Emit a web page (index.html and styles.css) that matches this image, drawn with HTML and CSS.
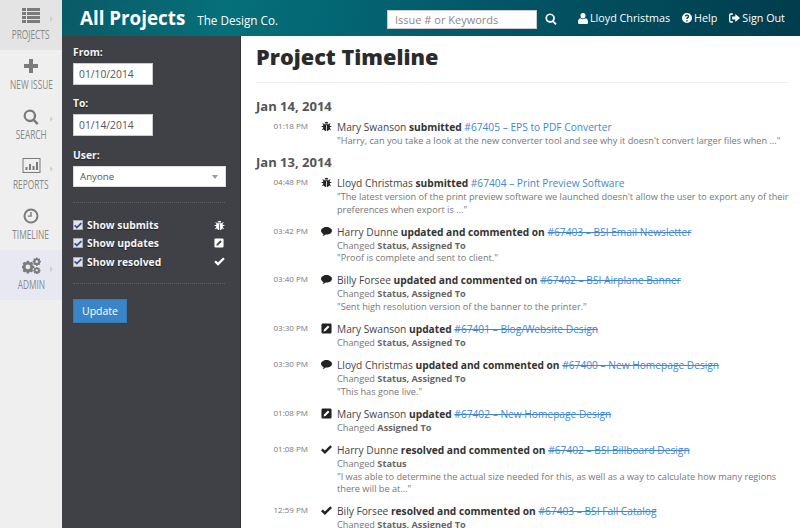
FILE: index.html
```html
<!DOCTYPE html>
<html lang="en">
<head>
<meta charset="utf-8">
<title>Project Timeline</title>
<link rel="stylesheet" href="styles.css">
</head>
<body>
<svg class="sprite" aria-hidden="true">
  <symbol id="i-bug" viewBox="0 0 14 14"><path d="M4.600 3.200a2.400 2.400 0 0 1 4.800 0zM3.600 4h6.800l.9-1.600 1 .6-1.100 1.900v1.600h2v1.200h-2V9l1.400 2.200-1 .7-1-1.500C10 11.700 8.500 12.700 7.500 12.800V5.500h-1v7.300C5.500 12.700 4 11.700 3.400 10.400l-1 1.500-1-.7L2.800 9V7.700h-2V6.500h2V4.900L1.700 3l1-.6z"/></symbol>
  <symbol id="i-comment" viewBox="0 0 14 12"><path d="M7 .2c3.800 0 7 2.200 7 4.900s-3.200 4.800-7 4.800H6c-1 .9-2.400 1.700-4 1.900.7-.7 1.200-1.600 1.300-2.500C1.300 8.300 0 6.800 0 5.100 0 2.400 3.200.2 7 .2z"/></symbol>
  <symbol id="i-edit" viewBox="0 0 12 12"><path fill-rule="evenodd" d="M2 .5h8A1.500 1.500 0 0 1 11.500 2v8a1.500 1.500 0 0 1-1.500 1.500H2A1.500 1.500 0 0 1 .5 10V2A1.500 1.500 0 0 1 2 .5zM7.600 2.800 3.300 7.100 2.800 9.200l2.100-.5 4.300-4.300z"/></symbol>
  <symbol id="i-check" viewBox="0 0 14 12"><path d="M5 11.800 0 6.800l2.200-2.200L5 7.400 11.800.6 14 2.800z"/></symbol>
  <symbol id="i-search" viewBox="0 0 16 16"><path fill-rule="evenodd" d="M6.800.5a6.300 6.300 0 0 1 5.100 10l3.700 3.700-1.700 1.700-3.700-3.700A6.300 6.300 0 1 1 6.800.5zm0 2.300a4 4 0 1 0 0 8 4 4 0 0 0 0-8z"/></symbol>
  <symbol id="i-list" viewBox="0 0 18 15"><path d="M0 0h4v3H0zM5 0h13v3H5zM0 4h4v3H0zM5 4h13v3H5zM0 8h4v3H0zM5 8h13v3H5zM0 12h4v3H0zM5 12h13v3H5z"/></symbol>
  <symbol id="i-plus" viewBox="0 0 14 14"><path d="M5 0h4v5h5v4H9v5H5V9H0V5h5z"/></symbol>
  <symbol id="i-chart" viewBox="0 0 18 15"><path fill-rule="evenodd" d="M0 0h18v15H0zm1 1v13h16V1zM3 9h2v3H3zM6.500 6h2v6h-2zM10 8h2v4h-2zM13.500 4h2v8h-2z"/></symbol>
  <symbol id="i-clock" viewBox="0 0 16 16"><path fill-rule="evenodd" d="M8 .5a7.500 7.500 0 1 1 0 15 7.500 7.500 0 0 1 0-15zm0 2a5.500 5.500 0 1 0 0 11 5.500 5.500 0 0 0 0-11zM7.300 4h1.400v4.800H4.800V7.400h2.500z"/></symbol>
  <symbol id="i-cogs" viewBox="0 0 20 17"><path fill-rule="evenodd" d="M5 3.500h2.400l.3 1.400 1.200.5 1.200-.8 1.700 1.700-.8 1.200.5 1.200 1.400.3v2.400l-1.400.3-.5 1.200.8 1.200-1.700 1.700-1.200-.8-1.200.5-.3 1.400H5l-.3-1.400-1.200-.5-1.200.8L.6 14.100l.8-1.200-.5-1.200-.9-.3V9l.9-.3.5-1.200-.8-1.200 1.700-1.700 1.200.8 1.200-.5zm1.200 4a2.500 2.500 0 1 0 0 5 2.500 2.500 0 0 0 0-5z"/><path fill-rule="evenodd" d="M14.800 0h1.500l.2 1 .8.300.9-.5 1 1-.5.900.3.800 1 .2V5.200l-1 .2-.3.800.5.900-1 1-.9-.5-.8.300-.2 1h-1.500l-.2-1-.8-.3-.9.5-1-1 .5-.9-.3-.8-1-.2V3.700l1-.2.3-.8-.5-.9 1-1 .9.500.8-.3zm.8 3a1.400 1.400 0 1 0 0 2.900 1.400 1.400 0 0 0 0-2.900z"/><path fill-rule="evenodd" d="M15 10h1.300l.2.800.7.300.7-.4.900.9-.4.700.3.700.8.200v1.300l-.8.200-.3.700.4.700-.9.900-.7-.4-.7.300-.2.800H15l-.2-.8-.7-.3-.7.4-.9-.9.4-.7-.3-.7-.8-.2v-1.300l.8-.2.3-.7-.4-.7.9-.9.700.4.700-.3zm.650 2.400a1.200 1.200 0 1 0 0 2.400 1.200 1.200 0 0 0 0-2.400z"/></symbol>
  <symbol id="i-user" viewBox="0 0 12 13"><path d="M6 0a3 3 0 0 1 3 3.200C9 5 7.700 6.500 6 6.500S3 5 3 3.200A3 3 0 0 1 6 0zM3.300 6.300C4 7 5 7.500 6 7.500s2-.5 2.700-1.200C10.600 6.500 12 8 12 10.500V12a1 1 0 0 1-1 1H1a1 1 0 0 1-1-1v-1.500C0 8 1.400 6.500 3.300 6.300z"/></symbol>
  <symbol id="i-help" viewBox="0 0 12 12"><path fill-rule="evenodd" d="M6 0a6 6 0 1 1 0 12A6 6 0 0 1 6 0zM5 8.600v1.700h1.900V8.600zM6 1.800c-1.500 0-2.500.8-2.700 2.100l1.600.3c.1-.6.500-.9 1-.9s.9.300.9.800c0 .4-.2.600-.7 1-.7.500-1.100 1-1.100 1.900v.2h1.800v-.1c0-.5.200-.7.700-1.100.7-.5 1.100-1 1.100-1.900 0-1.300-1-2.300-2.600-2.300z"/></symbol>
  <symbol id="i-signout" viewBox="0 0 14 12"><path d="M5 0v1.800H2.500c-.4 0-.7.300-.7.700v7c0 .4.300.7.700.7H5V12H2.500A2.500 2.500 0 0 1 0 9.500v-7A2.500 2.500 0 0 1 2.500 0zM8 1l6 5-6 5V8H4V4h4z"/></symbol>
</svg>

<div class="app">
  <nav class="rail">
    <a class="rail-item is-current"><svg class="rail-icon ic-list"><use href="#i-list"/></svg><span class="rail-label">PROJECTS</span><i class="rail-caret"></i></a>
    <a class="rail-item"><svg class="rail-icon ic-plus"><use href="#i-plus"/></svg><span class="rail-label">NEW ISSUE</span></a>
    <a class="rail-item"><svg class="rail-icon ic-search"><use href="#i-search"/></svg><span class="rail-label">SEARCH</span><i class="rail-caret"></i></a>
    <a class="rail-item"><svg class="rail-icon ic-chart"><use href="#i-chart"/></svg><span class="rail-label">REPORTS</span><i class="rail-caret"></i></a>
    <a class="rail-item"><svg class="rail-icon ic-clock"><use href="#i-clock"/></svg><span class="rail-label">TIMELINE</span></a>
    <a class="rail-item is-active"><svg class="rail-icon ic-cogs"><use href="#i-cogs"/></svg><span class="rail-label">ADMIN</span><i class="rail-caret"></i></a>
  </nav>

  <div class="shell">
    <header class="topbar">
      <div class="brand"><strong class="brand-title">All Projects</strong><span class="brand-sub">The Design Co.</span></div>
      <div class="search"><input class="search-input" type="text" placeholder="Issue # or Keywords"><svg class="search-icon"><use href="#i-search"/></svg></div>
      <div class="userlinks">
        <a class="ulink"><svg class="ul-icon ul-user"><use href="#i-user"/></svg>Lloyd Christmas</a>
        <a class="ulink"><svg class="ul-icon ul-help"><use href="#i-help"/></svg>Help</a>
        <a class="ulink"><svg class="ul-icon ul-out"><use href="#i-signout"/></svg>Sign Out</a>
      </div>
    </header>

    <div class="body">
      <aside class="filters">
        <label class="f-label">From:</label>
        <input class="f-date" type="text" value="01/10/2014">
        <label class="f-label f-to">To:</label>
        <input class="f-date" type="text" value="01/14/2014">
        <label class="f-label f-user">User:</label>
        <div class="f-select"><span>Anyone</span><i class="f-arrow"></i></div>
        <div class="f-rule"></div>
        <div class="f-checks">
          <div class="f-check"><span class="cbox"><svg viewBox="0 0 14 12"><use href="#i-check"/></svg></span><span class="f-check-text">Show submits</span><svg class="f-ic f-ic-bug"><use href="#i-bug"/></svg></div>
          <div class="f-check"><span class="cbox"><svg viewBox="0 0 14 12"><use href="#i-check"/></svg></span><span class="f-check-text">Show updates</span><svg class="f-ic f-ic-edit"><use href="#i-edit"/></svg></div>
          <div class="f-check"><span class="cbox"><svg viewBox="0 0 14 12"><use href="#i-check"/></svg></span><span class="f-check-text">Show resolved</span><svg class="f-ic f-ic-check"><use href="#i-check"/></svg></div>
        </div>
        <div class="f-rule f-rule-2"></div>
        <button class="f-btn" type="button">Update</button>
      </aside>

      <main class="content">
        <h1 class="page-title">Project Timeline</h1>
        <h2 class="day">Jan 14, 2014</h2>
        <div class="entry"><time>01:18 PM</time><svg class="e-ic"><use href="#i-bug"/></svg><div class="e-body"><p class="e-title">Mary Swanson <b>submitted</b> <a>#67405 – EPS to PDF Converter</a></p><p class="e-sub">"Harry, can you take a look at the new converter tool and see why it doesn't convert larger files when ..."</p></div></div>

        <h2 class="day day-next">Jan 13, 2014</h2>
        <div class="entry"><time>04:48 PM</time><svg class="e-ic"><use href="#i-bug"/></svg><div class="e-body"><p class="e-title">Lloyd Christmas <b>submitted</b> <a>#67404 – Print Preview Software</a></p><p class="e-sub">"The latest version of the print preview software we launched doesn't allow the user to export any of their preferences when export is ..."</p></div></div>
        <div class="entry"><time>03:42 PM</time><svg class="e-ic"><use href="#i-comment"/></svg><div class="e-body"><p class="e-title">Harry Dunne <b>updated and commented on</b> <a class="done">#67403 – BSI Email Newsletter</a></p><p class="e-sub">Changed <b>Status, Assigned To</b></p><p class="e-sub">"Proof is complete and sent to client."</p></div></div>
        <div class="entry"><time>03:40 PM</time><svg class="e-ic"><use href="#i-comment"/></svg><div class="e-body"><p class="e-title">Billy Forsee <b>updated and commented on</b> <a class="done">#67402 – BSI Airplane Banner</a></p><p class="e-sub">Changed <b>Status, Assigned To</b></p><p class="e-sub">"Sent high resolution version of the banner to the printer."</p></div></div>
        <div class="entry"><time>03:30 PM</time><svg class="e-ic"><use href="#i-edit"/></svg><div class="e-body"><p class="e-title">Mary Swanson <b>updated</b> <a class="done">#67401 – Blog/Website Design</a></p><p class="e-sub">Changed <b>Status, Assigned To</b></p></div></div>
        <div class="entry"><time>03:30 PM</time><svg class="e-ic"><use href="#i-comment"/></svg><div class="e-body"><p class="e-title">Lloyd Christmas <b>updated and commented on</b> <a class="done">#67400 – New Homepage Design</a></p><p class="e-sub">Changed <b>Status, Assigned To</b></p><p class="e-sub">"This has gone live."</p></div></div>
        <div class="entry"><time>01:08 PM</time><svg class="e-ic"><use href="#i-edit"/></svg><div class="e-body"><p class="e-title">Mary Swanson <b>updated</b> <a class="done">#67402 – New Homepage Design</a></p><p class="e-sub">Changed <b>Assigned To</b></p></div></div>
        <div class="entry"><time>01:08 PM</time><svg class="e-ic"><use href="#i-check"/></svg><div class="e-body"><p class="e-title">Harry Dunne <b>resolved and commented on</b> <a class="done">#67402 – BSI Billboard Design</a></p><p class="e-sub">Changed <b>Status</b></p><p class="e-sub">"I was able to determine the actual size needed for this, as well as a way to calculate how many regions there will be at..."</p></div></div>
        <div class="entry"><time>12:59 PM</time><svg class="e-ic"><use href="#i-check"/></svg><div class="e-body"><p class="e-title">Bily Forsee <b>resolved and commented on</b> <a class="done">#67403 – BSI Fall Catalog</a></p><p class="e-sub">Changed <b>Status, Assigned To</b></p></div></div>
      </main>
    </div>
  </div>
</div>
</body>
</html>
```

FILE: styles.css
```css
* { box-sizing: border-box; }
html, body { margin: 0; height: 100%; overflow: hidden; }
body { font-family: "Open Sans", "Liberation Sans", sans-serif; color: #333; background: #fff; }
.sprite { display: none; }
.app { display: flex; height: 528px; width: 800px; overflow: hidden; }

.rail { width: 62px; flex: none; background: #efefef; display: flex; flex-direction: column; }
.rail-item { position: relative; height: 50px; display: flex; flex-direction: column; align-items: center; color: #7f7f7f; }
.rail-item.is-current { background: #e4e4e4; }
.rail-item.is-active { background: #e8e8f2; }
.rail-icon { fill: #7b7b7b; margin-top: 8px; display: block; height: 16px; width: 20px; }
.rail-item .ic-list { width: 18px; height: 15px; }
.rail-item .ic-plus { width: 14px; height: 14px; margin-top: 9px; margin-bottom: 1px; }
.rail-item .ic-search { width: 16px; height: 16px; margin-top: 9px; margin-bottom: -1px; }
.rail-item .ic-chart { width: 19px; height: 15px; margin-bottom: 1px; }
.rail-item .ic-clock { width: 16px; height: 16px; }
.rail-item .ic-cogs { width: 19px; height: 17px; margin-top: 7px; }
.rail-label { font-size: 13px; line-height: 16px; margin-top: 2px; white-space: nowrap; transform: scaleX(.64); color: #888; }
.is-current .rail-label { margin-top: 3px; }
.rail-caret { position: absolute; right: 9px; top: 16px; border-left: 3px solid #d0d0d0; border-top: 3.500px solid transparent; border-bottom: 3.500px solid transparent; }

.shell { flex: 1; display: flex; flex-direction: column; min-width: 0; }
.topbar { height: 36px; flex: none; display: flex; align-items: center; color: #fff; padding-left: 18px; background:
  linear-gradient(100deg, #0a5a66 0, #05707a 22%, #03606f 45%, #025566 60%, #024a5a 78%, #003c4c 100%); }
.brand { display: flex; align-items: baseline; width: 307px; }
.brand-title { font-size: 18.800px; font-weight: 700; line-height: 34px; }
.brand-sub { font-size: 11.700px; margin-left: 12px; }
.search { display: flex; align-items: center; width: 191px; padding-top: 2px; }
.search-input { width: 150px; height: 19px; border: 1px solid #ccc; background: #fff; padding: 0 7px; font: 11px "Open Sans", sans-serif; color: #555; margin: 0; }
.search-input::placeholder { color: #8a8a8a; opacity: 1; }
.search-icon { width: 12px; height: 12px; margin-left: 8px; fill: #fff; }
.userlinks { display: flex; gap: 12px; font-size: 10.750px; white-space: nowrap; }
.ulink { display: flex; align-items: center; }
.ul-icon { fill: #fff; margin-right: 2px; }
.ul-user { width: 10px; height: 11px; }
.ul-help { width: 10px; height: 10px; }
.ul-out { width: 11px; height: 10px; }

.body { flex: 1; display: flex; min-height: 0; }
.filters { width: 179px; flex: none; background: #404047; padding: 9px 15px 0 11px; border-right: 1px solid #333; }
.f-label { display: block; font-size: 10.300px; font-weight: 700; line-height: 15px; color: #f5f5f5; text-shadow: 0 1px 1px #222; margin-bottom: 3px; }
.f-to { margin-top: 11px; }
.f-user { margin-top: 12px; }
.f-date { display: block; width: 80px; height: 22px; border: 1px solid #ccc; padding: 0 5px; font: 10.300px "Open Sans", sans-serif; color: #555; background: #fff; margin: 0; }
.f-select { width: 153px; height: 21px; background: #fff; border: 1px solid #ddd; display: flex; align-items: center; justify-content: space-between; padding: 0 7px 0 6px; font-size: 9.700px; color: #555; }
.f-arrow { border-top: 4px solid #999; border-left: 3px solid transparent; border-right: 3px solid transparent; }
.f-rule { border-top: 1px dotted #5e5e65; margin-top: 15px; }
.f-checks { margin-top: 13px; display: flex; flex-direction: column; }
.f-check { display: flex; align-items: center; height: 18.250px; }
.cbox { width: 10px; height: 10px; background: #e4e4e8; border: 1px solid #aaa; display: flex; align-items: center; justify-content: center; margin-right: 4px; }
.cbox svg { width: 8px; height: 7px; fill: #2f50a8; }
.f-check-text { font-size: 10.300px; font-weight: 700; color: #f5f5f5; text-shadow: 0 1px 1px #222; flex: 1; }
.f-ic { fill: #fff; }
.f-ic-bug { width: 11px; height: 11px; }
.f-ic-edit { width: 10px; height: 10px; margin-right: 1px; }
.f-ic-check { width: 11px; height: 9px; }
.f-rule-2 { margin-top: 12px; }
.f-btn { display: block; margin-top: 15px; width: 54px; height: 24px; background: #3a85c8; border: 1px solid #357ab8; color: #fff; font: 10.500px "Open Sans", sans-serif; padding: 0; }

.content { flex: 1; min-width: 0; padding: 0 11px 0 15px; background: #fff; overflow: hidden; }
.page-title { margin: 0 0 10px; font-size: 21.700px; font-weight: 800; line-height: 42px; color: #2b2b2b; border-bottom: 1px solid #eee; height: 47px; }
.day { margin: 0 0 4px; padding-top: 4px; font-size: 13px; font-weight: 700; line-height: 18px; color: #555; }
.day-next { margin-top: -2px; padding-top: 0; }
.entry { display: grid; grid-template-columns: 52px 29px 1fr; padding-bottom: 7.300px; }
.entry time { font-size: 8px; color: #777; text-align: right; line-height: 13px; }
.e-ic { width: 11px; height: 11px; fill: #222; margin: 2px 0 0 13px; }
.e-title { margin: 0; font-size: 10.200px; line-height: 16px; color: #444; }
.e-title b { color: #333; }
.e-title a { color: #3f88cc; }
.e-title a.done { text-decoration: line-through; }
.e-sub { margin: 0; font-size: 9.200px; line-height: 12.700px; color: #777; }
.e-sub b { color: #666; }
```
